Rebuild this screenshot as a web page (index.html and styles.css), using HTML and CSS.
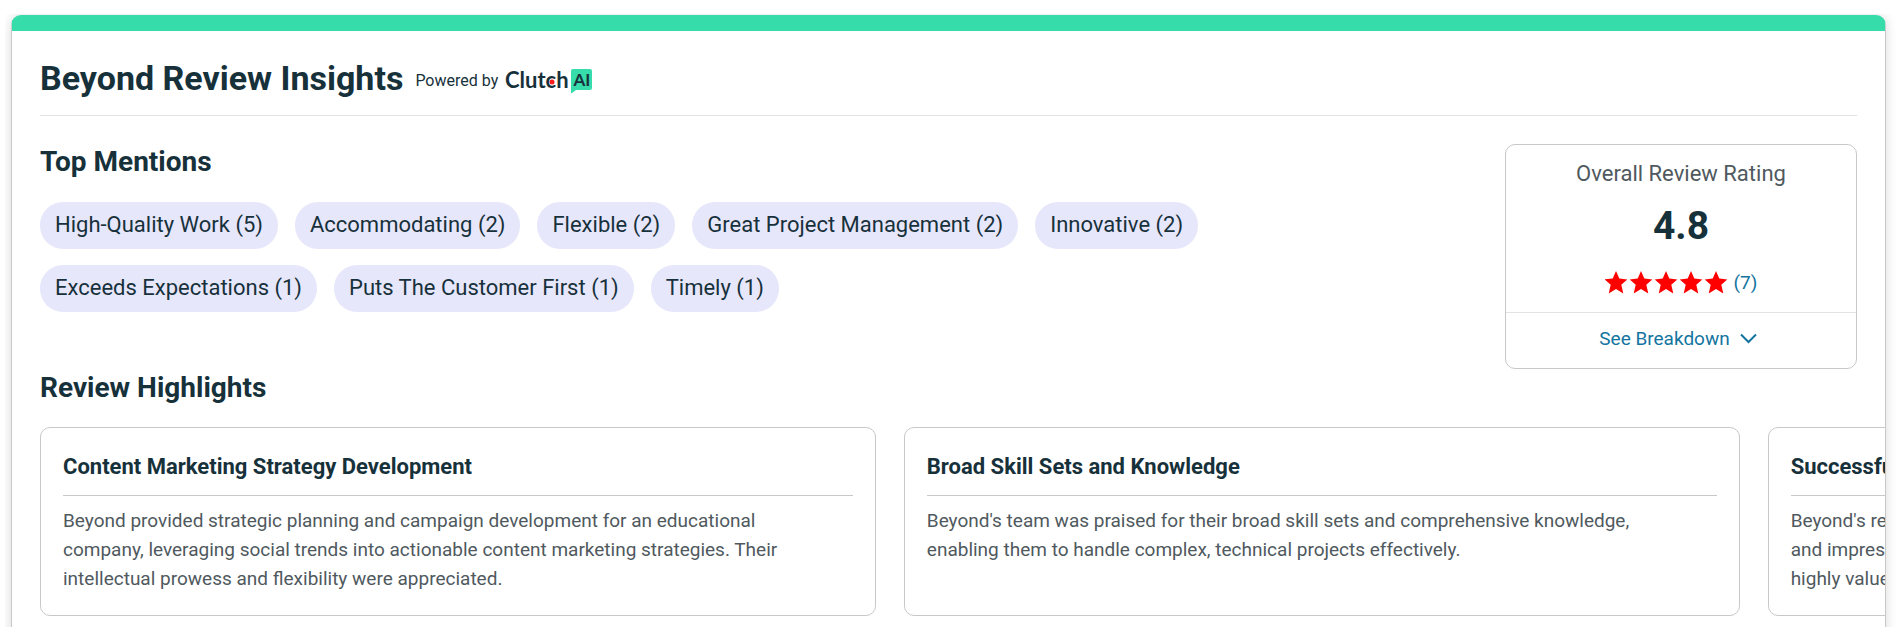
FILE: index.html
```html
<!DOCTYPE html>
<html lang="en">
<head>
  <meta charset="UTF-8" />
  <title>Beyond Review Insights</title>
  <meta name="viewport" content="width=device-width, initial-scale=1.0"/>
  <link rel="stylesheet" href="styles.css">
</head>
<body>

  <main class="page">
    <section class="insights">
      <header class="insights-header">
        <h2>Beyond Review Insights</h2>
        <div class="powered">
          <span>Powered by</span>
          <svg class="clutch-logo" width="88" height="30" viewBox="0 -3 88 30" role="img" aria-label="Clutch AI">
            <text class="logo-word" x="0" y="20">Clutch</text>
            <circle cx="47" cy="14" r="2.5" fill="#ff1b1b"/>
            <path d="M68 1h17a2 2 0 0 1 2 2v17a2 2 0 0 1-2 2H71l-4 3h-1V3a2 2 0 0 1 2-2z" fill="#37dcab"/>
            <text class="logo-ai" x="77" y="18" text-anchor="middle">AI</text>
          </svg>
        </div>
      </header>

      <div class="overview">
        <div class="mentions">
          <h3>Top Mentions</h3>
          <ul class="tags">
            <li>High-Quality Work (5)</li>
            <li>Accommodating (2)</li>
            <li>Flexible (2)</li>
            <li>Great Project Management (2)</li>
            <li>Innovative (2)</li>
            <li>Exceeds Expectations (1)</li>
            <li>Puts The Customer First (1)</li>
            <li>Timely (1)</li>
          </ul>
          <h3>Review Highlights</h3>
        </div>

        <aside class="rating">
          <div class="rating-label">Overall Review Rating</div>
          <div class="rating-score">4.8</div>
          <div class="rating-stars">
            <svg width="123" height="24" viewBox="0 0 123 24" fill="#ff0000" role="img" aria-label="4.8 out of 5 stars">
              <defs>
                <path id="star" d="M11 0l3.300 7.600 8 .8-6 5.400 2 8.700-7.300-4.400-7.300 4.400 2-8.700-6-5.400 8-.8z"/>
              </defs>
              <use href="#star"/>
              <use href="#star" x="25"/>
              <use href="#star" x="50"/>
              <use href="#star" x="75"/>
              <use href="#star" x="100"/>
            </svg>
            <a href="#reviews">(7)</a>
          </div>
          <button class="breakdown" type="button">
            See Breakdown
            <svg width="17" height="11" viewBox="0 0 17 11" fill="none" stroke="#1474a0" stroke-width="2">
              <path d="M1 1.500l7.500 7.500 7.500-7.500"/>
            </svg>
          </button>
        </aside>
      </div>

      <div class="highlights" id="reviews">
        <article class="highlight">
          <h4>Content Marketing Strategy Development</h4>
          <p>Beyond provided strategic planning and campaign development for an educational<br>company, leveraging social trends into actionable content marketing strategies. Their<br>intellectual prowess and flexibility were appreciated.</p>
        </article>
        <article class="highlight">
          <h4>Broad Skill Sets and Knowledge</h4>
          <p>Beyond's team was praised for their broad skill sets and comprehensive knowledge,<br>enabling them to handle complex, technical projects effectively.</p>
        </article>
        <article class="highlight">
          <h4>Successful Project Results</h4>
          <p>Beyond's results were well received by clients, with strong engagement<br>and impressive growth across their campaigns. Their work was<br>highly valued.</p>
        </article>
      </div>
    </section>
  </main>

</body>
</html>
```

FILE: styles.css
```css
* {
  box-sizing: border-box;
}
body {
  margin: 0;
  font-family: Roboto, Arial, sans-serif;
  background: white;
  color: #17313b;
}
h2, h3, h4, p, ul {
  margin: 0;
  padding: 0;
}
.page {
  margin: 14px 5px 0;
  padding: 1px 12px 0 6px;
  overflow: hidden;
}
.insights {
  padding: 0 28px 28px;
  background: white;
  border: 1px solid #c8c8c8;
  border-top: 16px solid #37dcab;
  border-radius: 10px;
  box-shadow: 0 0 12px rgba(0, 0, 0, 0.15);
  overflow: hidden;
}
.insights-header {
  display: flex;
  align-items: center;
  gap: 12px;
  height: 85px;
  padding-top: 10px;
  border-bottom: 1px solid #e3e3e3;
}
h2 {
  font-size: 34px;
  line-height: 40px;
}
.powered {
  display: flex;
  align-items: center;
  gap: 7px;
  padding-top: 4px;
  font-size: 16px;
}
.clutch-logo {
  display: block;
}
.logo-word {
  font: bold 22px Lato, sans-serif;
  fill: #17313b;
}
.logo-ai {
  font: bold 17px Lato, sans-serif;
  fill: #17313b;
}
.overview {
  display: flex;
  justify-content: space-between;
  padding-top: 28px;
}
.mentions {
  width: 66%;
}
h3 {
  font-size: 28px;
  line-height: 36px;
}
.tags {
  display: flex;
  flex-wrap: wrap;
  gap: 16px 17px;
  margin: 22px 0 58px;
  list-style: none;
}
.tags li {
  padding: 8px 15px 10px;
  font-size: 22px;
  line-height: 29px;
  background: #e7e7fb;
  border-radius: 23px;
}
.rating {
  display: flex;
  flex-direction: column;
  align-items: center;
  align-self: flex-start;
  width: 352px;
  border: 1px solid #c8c8c8;
  border-radius: 10px;
}
.rating-label {
  margin-top: 14px;
  font-size: 22px;
  line-height: 30px;
  color: #4f595e;
}
.rating-score {
  margin-top: 13px;
  font-size: 39px;
  font-weight: bold;
  line-height: 48px;
}
.rating-stars {
  display: flex;
  align-items: center;
  gap: 6px;
  margin: 19px 0 15px;
  font-size: 19px;
  line-height: 28px;
}
.rating-stars a {
  color: #1474a0;
  text-decoration: none;
}
.breakdown {
  display: flex;
  justify-content: center;
  align-items: center;
  gap: 10px;
  width: 100%;
  height: 56px;
  padding: 0 12px 4px 6px;
  font-family: inherit;
  font-size: 19px;
  color: #1474a0;
  background: none;
  border: none;
  border-top: 1px solid #e3e3e3;
  cursor: pointer;
}
.highlights {
  display: flex;
  gap: 28px;
  margin-top: 21px;
}
.highlight {
  flex: 0 0 46%;
  padding: 23px 22px 22px;
  border: 1px solid #c8c8c8;
  border-radius: 10px;
}
h4 {
  padding-bottom: 12px;
  font-size: 22px;
  line-height: 32px;
  border-bottom: 1px solid #c8c8c8;
}
.highlight p {
  margin-top: 10px;
  font-size: 19px;
  line-height: 29px;
  color: #4f595e;
}
```
